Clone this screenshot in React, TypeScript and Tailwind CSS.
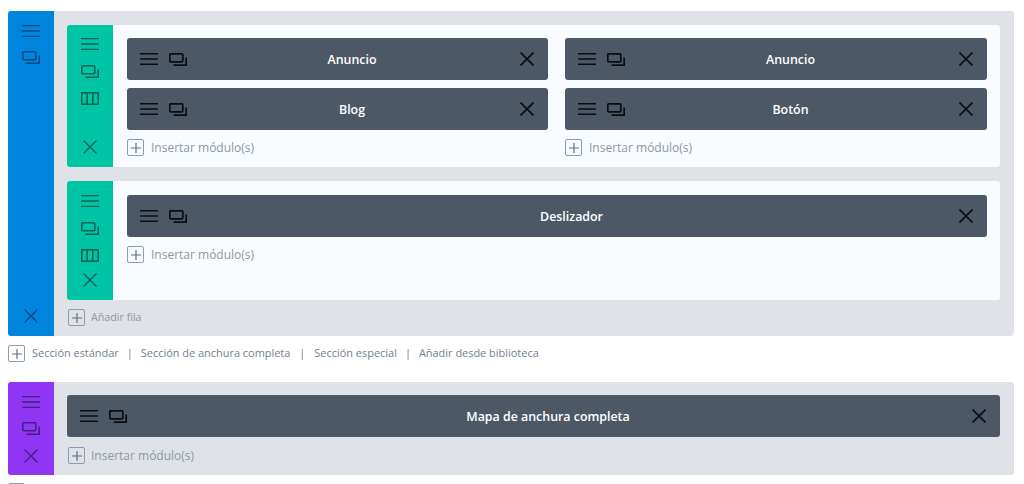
import type { ReactNode } from 'react'

function Bars({ className, width = 1.3 }: { className: string; width?: number }) {
  return (
    <svg viewBox="0 0 18 12" width="18" height="12" className={className} fill="none" stroke="currentColor" strokeWidth={width}>
      <path d="M0 0.7h18M0 6h18M0 11.3h18" />
    </svg>
  )
}

function Clone({ className, width = 1.5 }: { className: string; width?: number }) {
  return (
    <svg viewBox="0 0 18 13" width="18" height="13" className={className} fill="none" stroke="currentColor" strokeWidth={width}>
      <rect x="0.8" y="0.8" width="13" height="8" rx="1" />
      <path d="M17.2 4.5v7.7H4.5" />
    </svg>
  )
}

function Columns({ className }: { className: string }) {
  return (
    <svg viewBox="0 0 18 13" width="18" height="13" className={className} fill="none" stroke="currentColor" strokeWidth="1.5">
      <rect x="0.8" y="0.8" width="16.4" height="11.4" />
      <path d="M6.2 1v11M11.8 1v11" />
    </svg>
  )
}

function Close({ className, width = 1.4 }: { className: string; width?: number }) {
  return (
    <svg viewBox="0 0 14 14" width="14" height="14" className={className} fill="none" stroke="currentColor" strokeWidth={width}>
      <path d="M0.5 0.5l13 13M13.5 0.5l-13 13" />
    </svg>
  )
}

function PlusBox() {
  return (
    <span className="flex h-[17px] w-[17px] shrink-0 items-center justify-center rounded-[2px] border-[1.5px] border-[#8d9bb0]">
      <svg viewBox="0 0 10 10" width="10" height="10" fill="none" stroke="#5f6f82" strokeWidth="1.2">
        <path d="M5 0v10M0 5h10" />
      </svg>
    </span>
  )
}

function Adder({ label, className = '' }: { label: string; className?: string }) {
  return (
    <div className={`flex h-[17px] items-center text-[#8c98a6] ${className}`}>
      <PlusBox />
      <span>{label}</span>
    </div>
  )
}

function Module({ title }: { title: string }) {
  return (
    <div className="flex h-[42px] items-center rounded-[3px] bg-[#4c5866] pr-[14px] pl-[13px]">
      <Bars className="text-[#0a0c10]" width={1.6} />
      <Clone className="ml-[11px] text-[#0a0c10]" width={1.7} />
      <span className="flex-1 pt-[2px] pr-[3px] text-center text-[12.4px] font-semibold text-white">{title}</span>
      <Close className="text-[#0a0c10]" width={1.6} />
    </div>
  )
}

function Rail({ color, children }: { color: string; children?: ReactNode }) {
  return (
    <div className={`flex w-[46px] shrink-0 flex-col items-center rounded-l-[3px] ${color}`}>
      {children}
    </div>
  )
}

function Row({ children, className, top }: { children: ReactNode; className: string; top: string }) {
  return (
    <div className={`flex rounded-[3px] bg-[#f9fcfe] ${className}`}>
      <Rail color="bg-[#00c4a6] text-[#05604f]">
        <Bars className={top} />
        <Clone className="mt-[15px]" />
        <Columns className="mt-[14px]" />
        <Close className="mt-auto mb-[13px]" />
      </Rail>
      <div className={`flex-1 pr-[13px] pl-[14px] ${top}`}>{children}</div>
    </div>
  )
}

export default function App() {
  return (
    <div className="h-[484px] overflow-hidden bg-white pt-[11px] pr-[10px] pl-2 font-['Open_Sans',sans-serif]">
      <section className="flex h-[325px] rounded-[3px] bg-[#dfe3e7]">
        <Rail color="bg-[#0085de] text-[#05487c]">
          <Bars className="mt-[14px]" />
          <Clone className="mt-[14px]" />
          <Close className="mt-auto mb-[13px]" />
        </Rail>
        <div className="flex-1 pt-[14px] pr-[14px] pl-[13px]">
          <div className="flex flex-col gap-[14px]">
            <Row className="h-[142px]" top="mt-[13px]">
              <div className="grid grid-cols-[421px_1fr] gap-x-[17px]">
                <div className="flex flex-col gap-2">
                  <Module title="Anuncio" />
                  <Module title="Blog" />
                  <Adder label="Insertar módulo(s)" className="mt-[1px] gap-[7px] text-[12px]" />
                </div>
                <div className="flex flex-col gap-2">
                  <Module title="Anuncio" />
                  <Module title="Botón" />
                  <Adder label="Insertar módulo(s)" className="mt-[1px] gap-[7px] text-[12px]" />
                </div>
              </div>
            </Row>
            <Row className="h-[119px]" top="mt-[14px]">
              <Module title="Deslizador" />
              <Adder label="Insertar módulo(s)" className="mt-[9px] gap-[7px] text-[12px]" />
            </Row>
          </div>
          <Adder label="Añadir fila" className="mt-[9px] ml-[1px] gap-[6px] text-[10.7px]" />
        </div>
      </section>

      <div className="mt-[9px] flex h-[17px] items-center text-[10.95px] text-[#6f8091]">
        <PlusBox />
        <span className="ml-[7px]">Sección estándar</span>
        <span className="mx-2">|</span>
        <span>Sección de anchura completa</span>
        <span className="mx-[9px]">|</span>
        <span>Sección especial</span>
        <span className="mx-2">|</span>
        <span>Añadir desde biblioteca</span>
      </div>

      <section className="mt-5 flex h-[93px] rounded-[3px] bg-[#dfe3e7]">
        <Rail color="bg-[#8f35f3] text-[#42207f]">
          <Bars className="mt-[14px]" />
          <Clone className="mt-[14px]" />
          <Close className="mt-[14px]" />
        </Rail>
        <div className="flex-1 pt-[13px] pr-[14px] pl-[13px]">
          <Module title="Mapa de anchura completa" />
          <Adder label="Insertar módulo(s)" className="mt-[10px] ml-[1px] gap-[6px] text-[12px]" />
        </div>
      </section>

      <div className="mt-2">
        <PlusBox />
      </div>
    </div>
  )
}
